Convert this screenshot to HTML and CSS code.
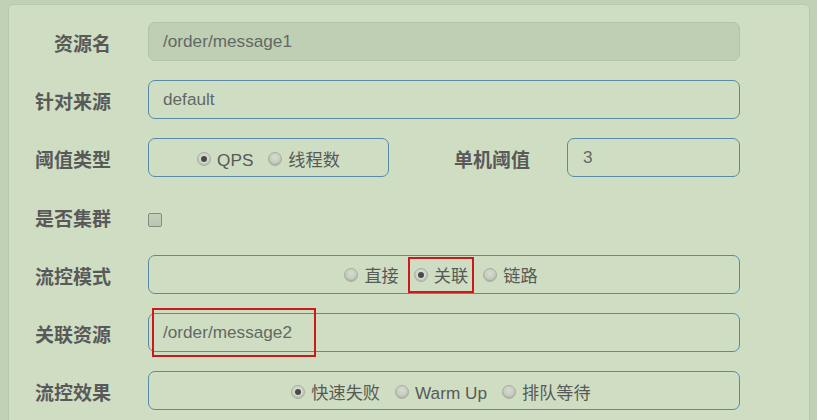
FILE: index.html
```html
<!DOCTYPE html>
<html lang="zh-CN">
<head>
<meta charset="utf-8">
<title>流控规则</title>
<link rel="stylesheet" href="styles.css">
</head>
<body>
<div class="panel">
  <form class="form">
    <div class="row">
      <label class="lbl">资源名</label>
      <div class="input disabled">/order/message1</div>
    </div>
    <div class="row">
      <label class="lbl">针对来源</label>
      <div class="input">default</div>
    </div>
    <div class="row">
      <label class="lbl">阈值类型</label>
      <div class="radios short">
        <span class="opt"><span class="radio checked"></span>QPS</span>
        <span class="opt"><span class="radio"></span>线程数</span>
      </div>
      <label class="lbl lbl2">单机阈值</label>
      <div class="input small">3</div>
    </div>
    <div class="row">
      <label class="lbl">是否集群</label>
      <span class="checkbox"></span>
    </div>
    <div class="row">
      <label class="lbl">流控模式</label>
      <div class="radios">
        <span class="opt"><span class="radio"></span>直接</span>
        <span class="opt marked"><span class="radio checked"></span>关联<span class="redbox"></span></span>
        <span class="opt"><span class="radio"></span>链路</span>
      </div>
    </div>
    <div class="row">
      <label class="lbl">关联资源</label>
      <div class="input marked">/order/message2<span class="redbox wide"></span></div>
    </div>
    <div class="row">
      <label class="lbl">流控效果</label>
      <div class="radios">
        <span class="opt"><span class="radio checked"></span>快速失败</span>
        <span class="opt"><span class="radio"></span>Warm Up</span>
        <span class="opt"><span class="radio"></span>排队等待</span>
      </div>
    </div>
  </form>
</div>
</body>
</html>
```

FILE: styles.css
```css
html, body {
  margin: 0;
  padding: 0;
  height: 100%;
  overflow: hidden;
}
body {
  background: #c1d1b5;
  font-family: "Liberation Sans", "Noto Sans CJK SC", sans-serif;
}
.panel {
  margin: 4px 7px 0 8px;
  height: 430px;
  background: #cfdec3;
  border: 1px solid #b9c9ad;
  border-radius: 5px;
  box-sizing: border-box;
  padding-top: 17px;
}
.form {
  display: flex;
  flex-direction: column;
  gap: 19.2px;
}
.row {
  display: flex;
  align-items: center;
  height: 39px;
}
.lbl {
  width: 102px;
  flex: none;
  margin-right: 37px;
  text-align: right;
  font-family: "Noto Sans CJK SC", sans-serif;
  font-weight: bold;
  font-size: 19px;
  color: #595959;
  line-height: 1;
  padding-top: 2px;
}
.lbl2 {
  width: 141px;
}
.input {
  position: relative;
  box-sizing: border-box;
  width: 592px;
  height: 39px;
  border: 1px solid #5b8aa6;
  border-radius: 7px;
  padding: 0 14px;
  display: flex;
  align-items: center;
  font-size: 17.2px;
  color: #636863;
}
.input.disabled {
  background: #bfcfb4;
  border-color: #b2c3a7;
}
.input.small {
  width: 173px;
  padding-left: 15px;
}
.radios {
  box-sizing: border-box;
  width: 592px;
  height: 39px;
  border: 1px solid #5b8aa6;
  border-radius: 7px;
  display: flex;
  align-items: center;
  justify-content: center;
  gap: 15px;
  padding-top: 4px;
  font-size: 17.2px;
  color: #575a57;
  padding-right: 6px;
}
.radios.short {
  width: 241px;
  padding-right: 0;
}
.opt {
  position: relative;
  display: inline-flex;
  align-items: center;
  white-space: nowrap;
  line-height: 20px;
  height: 20px;
}
.radio {
  width: 14px;
  height: 14px;
  box-sizing: border-box;
  border-radius: 50%;
  border: 1px solid #a7ae9f;
  background: radial-gradient(circle at 50% 35%, #d6dccf 0, #b9c1b2 100%);
  box-shadow: inset 0 -1px 1px rgba(120, 130, 110, 0.35);
  margin-right: 6px;
  margin-top: -2px;
  display: inline-flex;
  align-items: center;
  justify-content: center;
}
.radio.checked {
  background: radial-gradient(circle, #e2e7dd 0, #c3cabb 100%);
}
.radio.checked::after {
  content: "";
  width: 6px;
  height: 6px;
  border-radius: 50%;
  background: #4a4a4a;
}
.checkbox {
  width: 14px;
  height: 14px;
  box-sizing: border-box;
  border: 1px solid #848c80;
  border-radius: 2px;
  background: linear-gradient(#c4d0bb, #b9c5b0);
  margin-top: 8px;
}
.redbox {
  position: absolute;
  border: 2px solid #cc1a1a;
  pointer-events: none;
}
.opt.marked .redbox {
  left: -6px;
  right: -6px;
  top: -9px;
  bottom: -7px;
}
.redbox.wide {
  left: 3px;
  width: 164px;
  top: -6px;
  height: 49px;
  box-sizing: border-box;
}
```
